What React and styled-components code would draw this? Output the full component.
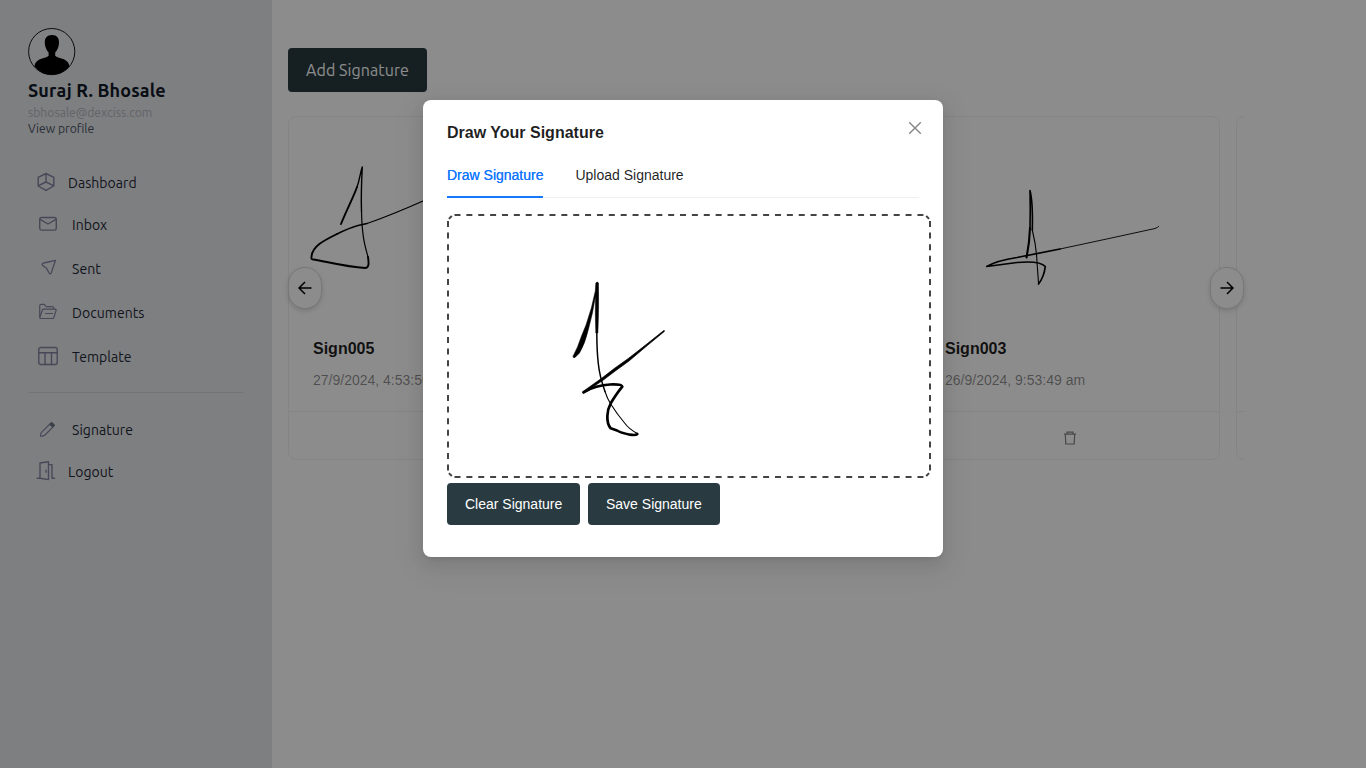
import React from 'react';
import styled, { createGlobalStyle } from 'styled-components';

const Global = createGlobalStyle`
  *, *::before, *::after { box-sizing: border-box; }
  body { margin: 0; background: #fff; overflow: hidden; font-family: "Liberation Sans", Arial, sans-serif; font-size: 14px; color: rgba(0,0,0,.88); }
  button { font: inherit; }
`;
const Page = styled.div`display: flex; height: 768px; width: 1366px;`;
const Sidebar = styled.aside`
  width: 272px; flex: none; padding: 28px 28px 0; background: #e5e7eb;
  font-family: Ubuntu, "Noto Sans", sans-serif; color: #1f2937;
`;
const Avatar = styled.svg`display: block; width: 48px; height: 48px;`;
const Name = styled.div`font-size: 18px; font-weight: 700; line-height: 28px; margin-bottom: 1px; letter-spacing: 0.14px; color: #111827; white-space: nowrap;`;
const Email = styled.div`font-size: 12.15px; line-height: 16px; color: #b4b6ba;`;
const Profile = styled.div`font-size: 12.15px; line-height: 16px; color: #4b5563;`;
const Nav = styled.nav`display: flex; flex-direction: column; padding-top: 26px;`;
const NavItem = styled.a`
  display: flex; align-items: center; height: ${p => (p.$compact ? 40 : 44)}px;
  padding-left: ${p => (p.$compact ? 8 : 10)}px; gap: ${p => (p.$compact ? 12 : 14)}px;
  font-size: 14px; letter-spacing: 0.05px;
  svg { width: 20px; height: 20px; margin-bottom: 2px; fill: none; stroke: #8284a0; stroke-width: 1.4; stroke-linejoin: round; stroke-linecap: round; overflow: visible; }
`;
const Divider = styled.hr`width: 216px; height: 1px; margin: 13px 0 15px; border: 0; background: #d0d3d8;`;
const Main = styled.main`padding: 48px 0 0 16px; flex: 1; min-width: 0;`;
const Button = styled.button`
  display: inline-flex; align-items: center; padding: 0 0 0 18px; border: 0; border-radius: 4px;
  background: #293b41; color: #fff; white-space: nowrap; width: ${p => p.$w}px; height: ${p => p.$h || 42}px;
`;
const AddButton = styled(Button)`font: 16px Ubuntu, "Noto Sans", sans-serif; letter-spacing: 0.08px;`;
const Carousel = styled.section`position: relative; margin-top: 24px; width: 956px;`;
const Track = styled.div`display: flex; gap: 16px; overflow: hidden;`;
const Card = styled.article`flex: none; width: 300px; height: 344px; border: 1px solid #f0f0f0; border-radius: 8px; background: #fff;`;
const Cover = styled.svg`display: block; width: 298px; height: 195px; fill: none; stroke: #000; stroke-linecap: round; stroke-linejoin: round;`;
const Meta = styled.div`height: 99px; padding: 25px 24px 0;`;
const CardTitle = styled.div`font-size: 16px; font-weight: 700; line-height: 24px; margin-bottom: 8px;`;
const CardDate = styled.div`line-height: 22px; color: rgba(0,0,0,.45); font-size: 14px;`;
const Actions = styled.div`
  display: flex; align-items: center; justify-content: center; height: 48px; padding-top: 4px; border-top: 1px solid #f0f0f0;
  svg { width: 14px; height: 14px; fill: none; stroke: #858585; stroke-width: 1.2; }
`;
const Arrow = styled.button`
  position: absolute; top: 151px; ${p => p.$side}: 0; width: 34px; height: 42px; padding: 0;
  display: flex; align-items: center; justify-content: center; border: 1px solid #d9d9d9; border-radius: 17px;
  background: #fff; box-shadow: 0 2px 5px rgba(0,0,0,.15);
  svg { width: 14px; height: 14px; fill: none; stroke: #000; stroke-width: 1.5; }
`;
const Mask = styled.div`
  position: absolute; inset: 0; display: flex; justify-content: center; align-items: flex-start;
  padding-top: 100px; background: rgba(0,0,0,.45);
`;
const Dialog = styled.div`
  position: relative; width: 520px; height: 457px; padding: 21px 24px 20px; background: #fff; border-radius: 8px;
  box-shadow: 0 6px 16px rgba(0,0,0,.08), 0 3px 6px -4px rgba(0,0,0,.12), 0 9px 28px 8px rgba(0,0,0,.05);
`;
const DialogTitle = styled.div`font-size: 16px; font-weight: 700; line-height: 24px; margin-bottom: 7px;`;
const Close = styled.button`
  position: absolute; top: 17px; right: 17px; width: 22px; height: 22px; padding: 0; border: 0; background: none;
  display: flex; align-items: center; justify-content: center;
  svg { width: 14px; height: 14px; stroke: #858585; stroke-width: 1.4; }
`;
const Tabs = styled.div`display: flex; gap: 32px; height: 46px; box-shadow: inset 0 -1px #f0f0f0; margin-bottom: 16px;`;
const Tab = styled.div`
  padding: 12px 0 10px; line-height: 22px; white-space: nowrap;
  width: ${p => p.$w}px; border-bottom: 2px solid ${p => (p.$active ? '#1677ff' : 'transparent')};
  color: ${p => (p.$active ? '#1677ff' : 'rgba(0,0,0,.88)')};
  text-shadow: ${p => (p.$active ? '0 0 .25px currentcolor' : 'none')};
`;
const Pad = styled.svg`display: block; width: 484px; height: 264px; fill: none; stroke-linejoin: round;`;
const ButtonRow = styled.div`display: flex; gap: 8px; margin-top: 5px;`;

const icons = {
  cube: <svg viewBox="0 0 20 20"><path d="M10 1.500 17.800 5.300V14L10 18.300 2.200 14V5.300ZM10 1.500V10M2.500 13.700 10 10l7.500 3.700" /></svg>,
  mail: <svg viewBox="0 0 20 20"><rect x="1.7" y="3.500" width="16.6" height="12.600" rx="2" /><path d="m2 5.400 8 4.600 8-4.600" /></svg>,
  send: <svg viewBox="0 0 20 20"><path d="M17.500 2.300 5.700 5Q3.300 5.800 4.700 7.500L8.500 10.300l2.700 4.800q1 1.300 2 0Z" strokeWidth="1.300" /></svg>,
  folder: <svg viewBox="0 0 20 20"><path d="M1.700 15.500V3.900q0-1.500 1.500-1.500h3l2.200 2.200h6q1.500 0 1.500 2M1.800 15.500 4.300 8.200q.3-1 1.300-1H17q1.500 0 1 1.500l-2.200 7q-.3.800-1.200.8H3q-1.200 0-1.200-1M7.500 11.500h7" strokeWidth="1.2" /></svg>,
  table: <svg viewBox="0 0 20 20"><rect x=".8" y="1.500" width="18.400" height="17" rx="2" /><path d="M.8 6.700h18.400M7 6.700v11.800M13.500 6.700v11.800" /></svg>,
  pencil: <svg viewBox="0 0 20 20"><path d="m12 5 3 3-7.500 7.500q-2 2-5 1.800-.2-3.200 1.500-4.500Z" strokeWidth="1.1" /><path d="m11.900 4.900 1.700-1.700 3.200 3-1.700 1.800Z" fill="#687282" stroke="#687282" strokeWidth="1" /></svg>,
  door: <svg viewBox="0 0 20 20"><path d="M4 2 12.500.8v17.800L4 17.300ZM1.200 17.300H4M12.500 3.600H16v13.700h2.500M10 9.300v2" /></svg>,
};

function TrashIcon() {
  return <svg viewBox="0 0 14 14"><path d="M1 3.200h12M4 3V1.200h6V3M2.300 3.300l.5 9.700h8.400l.5-9.700" /></svg>;
}

function SignatureCard({ title, date, children }) {
  return (
    <Card>
      <Cover viewBox="0 0 298 195">{children}</Cover>
      <Meta><CardTitle>{title}</CardTitle><CardDate>{date}</CardDate></Meta>
      <Actions>{title && <TrashIcon />}</Actions>
    </Card>
  );
}

function DashedFrame() {
  return (
    <g stroke="#444" strokeWidth="2">
      <path strokeDasharray="6 5.870" d="M7.500 1H477M7.500 263H477" />
      <path strokeDasharray="6 5.600" d="M1 7V257M483 7V257" />
      <path d="m1.900 4.900 2.900-2.900M479.200 2l2.900 2.900M1.900 259.100l2.900 2.900M479.200 262l2.900-2.900" />
    </g>
  );
}

export default function App() {
  return (
    <>
      <Global />
      <Page>
        <Sidebar>
          <Avatar viewBox="0 0 48 48">
            <circle cx="23.7" cy="23.6" r="23.1" fill="#fff" fillOpacity=".28" stroke="#000" strokeWidth=".9" />
            <path d="M24 7c5 0 7.300 3 7 8.300c-.2 4-1.800 7-3.800 9.200v3.300c3 3 13.800 2.400 14.200 10.700q-7 8.200-17.700 8.200T6.600 38.500c.3-8.300 11-7.700 14-10.700v-3.300c-2-2.200-3.600-5.200-3.800-9.200C16.500 10 19 7 24 7Z" fill="#000" />
          </Avatar>
          <Name>Suraj R. Bhosale</Name>
          <Email>sbhosale@dexciss.com</Email>
          <Profile>View profile</Profile>
          <Nav>
            <NavItem $compact>{icons.cube}Dashboard</NavItem>
            <NavItem>{icons.mail}Inbox</NavItem>
            <NavItem>{icons.send}Sent</NavItem>
            <NavItem>{icons.folder}Documents</NavItem>
            <NavItem>{icons.table}Template</NavItem>
            <Divider />
            <NavItem>{icons.pencil}Signature</NavItem>
            <NavItem $compact>{icons.door}Logout</NavItem>
          </Nav>
        </Sidebar>
        <Main>
          <AddButton $w={139} $h={44}>Add Signature</AddButton>
          <Carousel>
            <Track>
              <SignatureCard title="Sign005" date="27/9/2024, 4:53:56 pm">
                <path strokeWidth="1.9" d="M52 107C58 92 65 79 68 70" />
                <path strokeWidth="1.4" d="M68 70C71 62 71 56 73.300 50C72.500 65 72 80 72.500 94" />
                <path strokeWidth="1.2" d="M72.500 94C73 120 76 129 79 140" />
                <path strokeWidth="1.9" d="M79 140C80 147 80 151 76 151C58 150 39 145 25 142.500Q22 143 22.500 140C23 129 36 123 48 117" />
                <path strokeWidth="1.5" d="M48 117Q60 111 69 108.500L78 106.500" />
                <path strokeWidth="1.2" d="M78 106.500C97 100 116 92 134 84L170 71" />
              </SignatureCard>
              <SignatureCard title="Sign004" date="26/9/2024, 9:55:12 am" />
              <SignatureCard title="Sign003" date="26/9/2024, 9:53:49 am">
                <path strokeWidth="2.1" d="M105.500 140.500Q108.500 126 109 111" />
                <path strokeWidth="1.6" d="M109 111Q109.500 92 109 73.500Q112 85 111.300 113" />
                <path strokeWidth="1.1" d="M111.300 113Q115.500 130 116 145L117.500 166" />
                <path strokeWidth="1.7" d="M117.500 167Q123 160 124.300 149.500Q119 143.500 96 145.500L65.700 149.500Q76 143.500 96 140.500L139 132" />
                <path strokeWidth=".9" d="M139 132L185.700 122L234 111.500Q237 110.500 237.700 109.500" />
              </SignatureCard>
              <SignatureCard />
            </Track>
            <Arrow $side="left"><svg viewBox="0 0 14 14"><path d="M13.500 7H1M7 1 1 7l6 6" /></svg></Arrow>
            <Arrow $side="right"><svg viewBox="0 0 14 14"><path d="M.5 7H13M7 1l6 6-6 6" /></svg></Arrow>
          </Carousel>
        </Main>
      </Page>
      <Mask>
        <Dialog>
          <DialogTitle>Draw Your Signature</DialogTitle>
          <Close><svg viewBox="0 0 14 14"><path d="m1.200 1.200 11.600 11.600m0-11.600L1.200 12.800" /></svg></Close>
          <Tabs><Tab $active $w={96.45}>Draw Signature</Tab><Tab>Upload Signature</Tab></Tabs>
          <Pad viewBox="0 0 484 264">
            <DashedFrame />
            <g transform="translate(2 2)" stroke="#000" strokeLinecap="round">
              <path fill="#000" strokeWidth=".5" d="M124.200 140Q129 131 132.500 120L137 109Q143 92 146.300 75L146.800 67Q148.300 65 149.500 67Q150 90 148.900 117L146.800 117Q146 98 146.500 80Q144 97 139.500 113Q136 128 130.500 137L126 141.500Q123.800 142.500 124.200 140Z" />
              <path strokeWidth="1.500" d="M147.800 117Q147.900 136 149.300 147.500Q150.500 160 156 175.500" />
              <path strokeWidth="1.100" d="M156 175.500Q158 182 161.700 188Q168 198 176 207.500Q180 213 188.300 217.500" />
              <path strokeWidth="2.700" d="M188.300 218Q187 219.500 181 218.700Q171 216.500 168 214.500L161.700 212.300C156.500 206 158 194 161.700 187.300Q168 177 173.300 170.700Q173 168 161 168.500Q147 169 134.500 176.300" />
              <path fill="#000" strokeWidth=".7" d="M134 175.500L153 162Q164 153 179 142.700L197.500 128.300L214.700 114.600Q216 114.500 215.300 115.500L198.300 129.500L180 145Q166 155 154 164.300L135 177Z" />
            </g>
          </Pad>
          <ButtonRow><Button $w={133}>Clear Signature</Button><Button $w={132}>Save Signature</Button></ButtonRow>
        </Dialog>
      </Mask>
    </>
  );
}
